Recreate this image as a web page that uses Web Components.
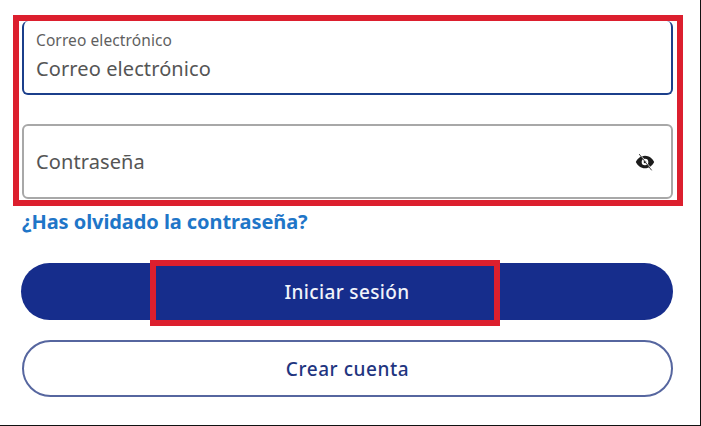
<!DOCTYPE html>
<html lang="es">
<head>
<meta charset="utf-8">
<title>Login</title>
<style>
  html, body { margin: 0; padding: 0; background: #fff; }
  body { width: 701px; height: 426px; overflow: hidden; font-family: "Noto Sans", sans-serif; }
</style>
</head>
<body>
<login-screen></login-screen>

<script>
// Campo de texto con etiqueta flotante opcional
class TextField extends HTMLElement {
    constructor() {
        super();
        this.attachShadow({ mode: 'open' });
        this.shadowRoot.innerHTML = `
            <style>
                :host {
                    display: flex;
                    box-sizing: border-box;
                    height: 75px;
                    align-items: center;
                    justify-content: space-between;
                    padding: 0 16px 0 12px;
                    background: #fff;
                    border: 2px solid #a8a8a8;
                    border-radius: 6px;
                    color: #555;
                }
                :host([focused]) {
                    height: 74px;
                    border: 2px solid #1b3f8b;
                    border-top-width: 0;
                    align-items: flex-start;
                }
                .label { font-size: 15.5px; line-height: 20px; letter-spacing: .1px; color: #5f5f5f; margin-top: 9px; }
                .value { font-size: 20px; line-height: 28px; letter-spacing: .1px; }
                :host([focused]) .value { margin-top: 5px; }
                ::slotted(svg) { display: block; }
            </style>
            <div class="text">
                <div class="label"></div>
                <div class="value"></div>
            </div>
            <slot></slot>
        `;
    }

    connectedCallback() {
        const label = this.shadowRoot.querySelector('.label');
        label.textContent = this.getAttribute('label') || '';
        label.style.display = this.hasAttribute('focused') ? 'block' : 'none';
        this.shadowRoot.querySelector('.value').textContent = this.getAttribute('value') || '';
    }
}

// Botón redondeado, relleno o con contorno
class PillButton extends HTMLElement {
    constructor() {
        super();
        this.attachShadow({ mode: 'open' });
        this.shadowRoot.innerHTML = `
            <style>
                :host {
                    display: flex;
                    box-sizing: border-box;
                    height: 57px;
                    align-items: center;
                    justify-content: center;
                    border-radius: 29px;
                    background: #162d8c;
                    color: #f1f3fa;
                    font-size: 19px;
                    font-weight: 500;
                    letter-spacing: .35px;
                    padding-top: 1px;
                }
                :host([outline]) {
                    background: #fff;
                    color: #1f3580;
                    border: 2px solid #56669f;
                    font-weight: 500;
                    letter-spacing: .55px;
                    padding-top: 0;
                }
            </style>
            <slot></slot>
        `;
    }
}

// Recuadro rojo de anotación sobre la captura
class RedMark extends HTMLElement {
    constructor() {
        super();
        this.attachShadow({ mode: 'open' });
        this.shadowRoot.innerHTML = `
            <style>
                :host {
                    display: block;
                    box-sizing: border-box;
                    border: 6px solid #dc1f2e;
                }
            </style>
            <slot></slot>
        `;
    }
}

class LoginScreen extends HTMLElement {
    constructor() {
        super();
        this.attachShadow({ mode: 'open' });
        this.shadowRoot.innerHTML = `
            <style>
                :host {
                    display: block;
                    box-sizing: border-box;
                    width: 701px;
                    height: 426px;
                    padding-top: 15px;
                    border-bottom: 1px solid #111;
                    position: relative;
                    overflow: hidden;
                }
                .edge { position: absolute; right: 0; top: 0; bottom: 0; width: 1px; background: #111; }
                .fields {
                    width: 670px;
                    height: 191px;
                    margin-left: 13px;
                    padding: 0 4px 1px 3px;
                }
                .fields-inner { display: flex; flex-direction: column; gap: 29px; }
                .forgot {
                    margin: -1px 0 0 22px;
                    height: 34px;
                    line-height: 34px;
                    font-size: 20px;
                    font-weight: 700;
                    letter-spacing: -.07px;
                    color: #1f76c8;
                }
                .actions {
                    display: flex;
                    flex-direction: column;
                    gap: 20px;
                    margin: 24px 28px 0 21px;
                }
                .actions pill-button[outline] { margin-left: 1px; }
                .login-mark {
                    position: absolute;
                    left: 150px;
                    top: 260px;
                    width: 350px;
                    height: 66px;
                }
            </style>
            <red-mark class="fields">
                <div class="fields-inner">
                    <text-field focused label="Correo electrónico" value="Correo electrónico"></text-field>
                    <text-field value="Contraseña">
                        <svg width="20" height="20" viewBox="0 0 24 24" fill="#1c1c1c">
                            <path fill-rule="evenodd" d="M12 4.500C7 4.500 3 7.800 1 12c2 4.200 6 7.500 11 7.500s9-3.300 11-7.500c-2-4.200-6-7.500-11-7.500zm0 11.500a4 4 0 1 1 0-8 4 4 0 0 1 0 8z"/>
                            <circle cx="12" cy="12" r="1.600"/>
                            <path d="M5 2.500l15 19.500" stroke="#fff" stroke-width="1" fill="none" transform="translate(1 0)"/>
                            <path d="M5 2.500l15 19.500" stroke="#444" stroke-width="1.200" fill="none"/>
                        </svg>
                    </text-field>
                </div>
            </red-mark>
            <div class="forgot">¿Has olvidado la contraseña?</div>
            <div class="actions">
                <pill-button>Iniciar sesión</pill-button>
                <pill-button outline>Crear cuenta</pill-button>
            </div>
            <red-mark class="login-mark"></red-mark>
            <div class="edge"></div>
        `;
    }
}

customElements.define('text-field', TextField);
customElements.define('pill-button', PillButton);
customElements.define('red-mark', RedMark);
customElements.define('login-screen', LoginScreen);
</script>
</body>
</html>
